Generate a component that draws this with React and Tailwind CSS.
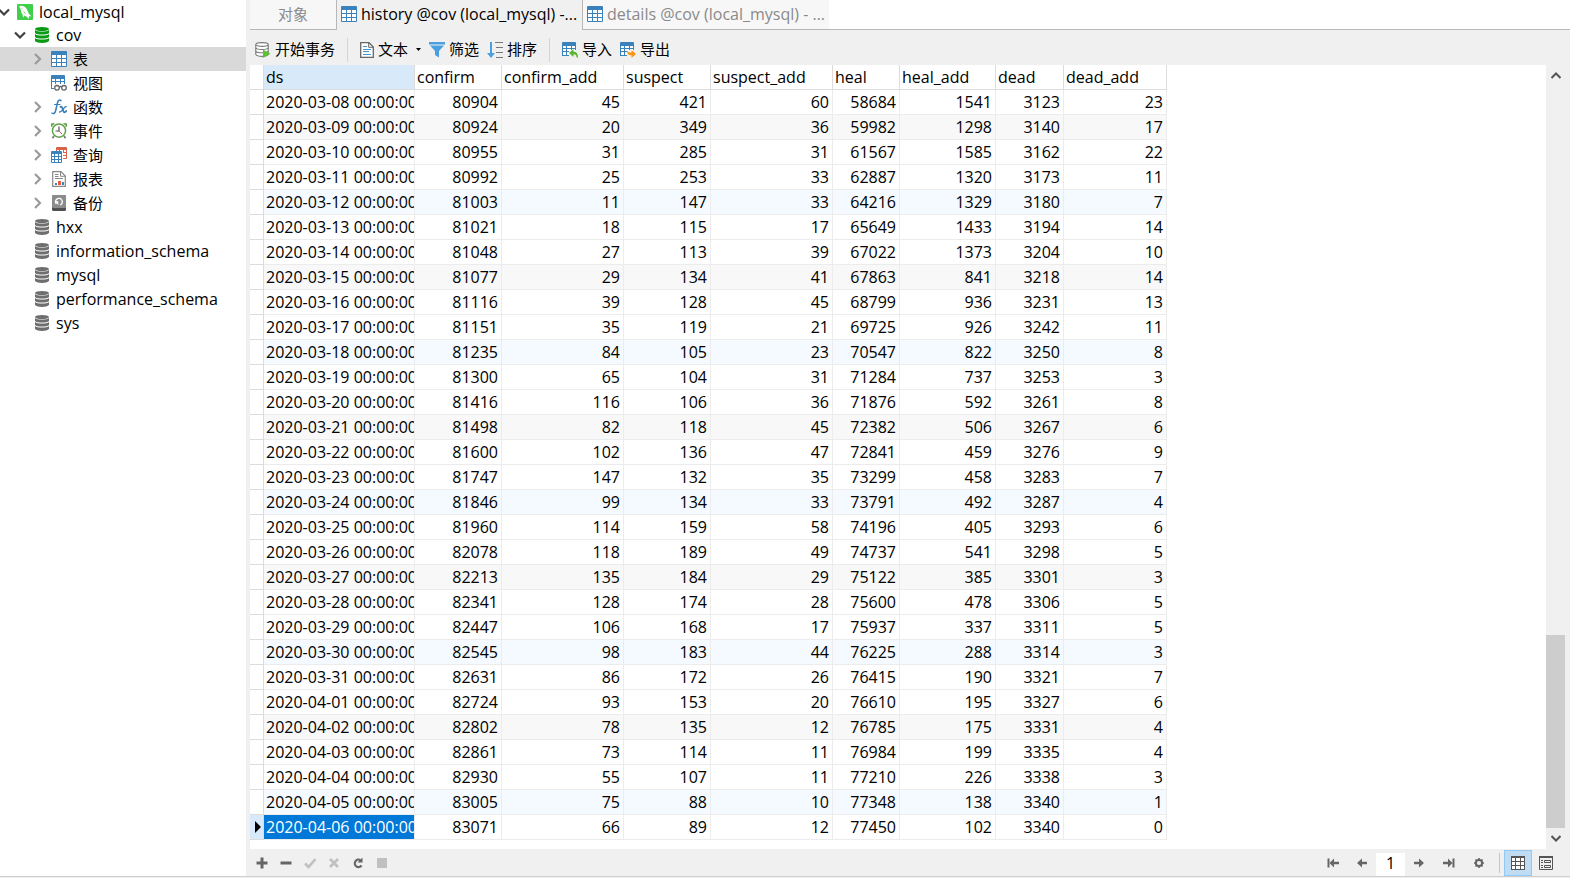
import React, { useState } from 'react';

const columns = [
  { name: 'ds', width: 'w-[151px]' },
  { name: 'confirm', width: 'w-[87px]' },
  { name: 'confirm_add', width: 'w-[122px]' },
  { name: 'suspect', width: 'w-[87px]' },
  { name: 'suspect_add', width: 'w-[122px]' },
  { name: 'heal', width: 'w-[67px]' },
  { name: 'heal_add', width: 'w-[96px]' },
  { name: 'dead', width: 'w-[68px]' },
  { name: 'dead_add', width: 'w-[103px]' },
];

const rows = [
  ['2020-03-08 00:00:00', 80904, 45, 421, 60, 58684, 1541, 3123, 23],
  ['2020-03-09 00:00:00', 80924, 20, 349, 36, 59982, 1298, 3140, 17],
  ['2020-03-10 00:00:00', 80955, 31, 285, 31, 61567, 1585, 3162, 22],
  ['2020-03-11 00:00:00', 80992, 25, 253, 33, 62887, 1320, 3173, 11],
  ['2020-03-12 00:00:00', 81003, 11, 147, 33, 64216, 1329, 3180, 7],
  ['2020-03-13 00:00:00', 81021, 18, 115, 17, 65649, 1433, 3194, 14],
  ['2020-03-14 00:00:00', 81048, 27, 113, 39, 67022, 1373, 3204, 10],
  ['2020-03-15 00:00:00', 81077, 29, 134, 41, 67863, 841, 3218, 14],
  ['2020-03-16 00:00:00', 81116, 39, 128, 45, 68799, 936, 3231, 13],
  ['2020-03-17 00:00:00', 81151, 35, 119, 21, 69725, 926, 3242, 11],
  ['2020-03-18 00:00:00', 81235, 84, 105, 23, 70547, 822, 3250, 8],
  ['2020-03-19 00:00:00', 81300, 65, 104, 31, 71284, 737, 3253, 3],
  ['2020-03-20 00:00:00', 81416, 116, 106, 36, 71876, 592, 3261, 8],
  ['2020-03-21 00:00:00', 81498, 82, 118, 45, 72382, 506, 3267, 6],
  ['2020-03-22 00:00:00', 81600, 102, 136, 47, 72841, 459, 3276, 9],
  ['2020-03-23 00:00:00', 81747, 147, 132, 35, 73299, 458, 3283, 7],
  ['2020-03-24 00:00:00', 81846, 99, 134, 33, 73791, 492, 3287, 4],
  ['2020-03-25 00:00:00', 81960, 114, 159, 58, 74196, 405, 3293, 6],
  ['2020-03-26 00:00:00', 82078, 118, 189, 49, 74737, 541, 3298, 5],
  ['2020-03-27 00:00:00', 82213, 135, 184, 29, 75122, 385, 3301, 3],
  ['2020-03-28 00:00:00', 82341, 128, 174, 28, 75600, 478, 3306, 5],
  ['2020-03-29 00:00:00', 82447, 106, 168, 17, 75937, 337, 3311, 5],
  ['2020-03-30 00:00:00', 82545, 98, 183, 44, 76225, 288, 3314, 3],
  ['2020-03-31 00:00:00', 82631, 86, 172, 26, 76415, 190, 3321, 7],
  ['2020-04-01 00:00:00', 82724, 93, 153, 20, 76610, 195, 3327, 6],
  ['2020-04-02 00:00:00', 82802, 78, 135, 12, 76785, 175, 3331, 4],
  ['2020-04-03 00:00:00', 82861, 73, 114, 11, 76984, 199, 3335, 4],
  ['2020-04-04 00:00:00', 82930, 55, 107, 11, 77210, 226, 3338, 3],
  ['2020-04-05 00:00:00', 83005, 75, 88, 10, 77348, 138, 3340, 1],
  ['2020-04-06 00:00:00', 83071, 66, 89, 12, 77450, 102, 3340, 0],
];

const rowColor = (i) => {
  if (i % 6 === 1) return 'bg-[#f8f8f8]';
  if (i % 6 === 4) return 'bg-[#f4faff]';
  return 'bg-white';
};

const Chevron = ({ open }) => (
  <svg width="12" height="12" viewBox="0 0 12 12" fill="none" strokeWidth="2.2" stroke={open ? '#404040' : '#9a9a9a'}>
    <path d={open ? 'M1 3.5L6 8.5L11 3.5' : 'M3 1L8 6L3 11'} />
  </svg>
);

const ServerIcon = () => (
  <svg width="16" height="16" viewBox="0 0 16 16">
    <rect width="16" height="16" rx="1" fill="#3fcf4b" />
    <path d="M2 2.2C4.5 0.8 8 2.2 9.6 4.8C10.8 7 11 9.5 14.5 12.3L12 12.2L11.8 15C10.5 13 9 12.6 7.6 11.6L6 13.8L5.6 10.6C3.8 8.6 4.6 5.4 2 2.2Z" fill="#fff" />
    <path d="M4.6 4.4L5.4 5M6.5 7.5L8.5 9.5" stroke="#3fcf4b" strokeWidth="0.9" />
  </svg>
);

const DatabaseIcon = ({ color }) => (
  <svg width="14" height="16" viewBox="0 0 14 16" fill={color}>
    <ellipse cx="7" cy="2" rx="7" ry="2" />
    <path d="M0 3C2 5 12 5 14 3V6C12 8 2 8 0 6Z" />
    <path d="M0 7C2 9 12 9 14 7V10C12 12 2 12 0 10Z" />
    <path d="M0 11C2 13 12 13 14 11V14C12 16.5 2 16.5 0 14Z" />
  </svg>
);

const TableIcon = () => (
  <svg width="16" height="16" viewBox="0 0 16 16">
    <rect width="16" height="16" rx="1" fill="#3b82bd" />
    <path d="M1 4H5V7H1ZM6 4H10V7H6ZM11 4H15V7H11ZM1 8H5V11H1ZM6 8H10V11H6ZM11 8H15V11H11ZM1 12H5V15H1ZM6 12H10V15H6ZM11 12H15V15H11Z" fill="#fff" />
  </svg>
);

const ViewIcon = () => (
  <svg width="16" height="16" viewBox="0 0 16 16">
    <path d="M0 1Q0 0 1 0H13Q14 0 14 1V9H0Z" fill="#3b82bd" />
    <path d="M0 8H1V13H3V14H0Z" fill="#3b82bd" />
    <path d="M1 4H4V6H1ZM5 4H9V6H5ZM10 4H13V6H10ZM1 7H4V9H1ZM5 7H9V9H5ZM10 7H13V9H10Z" fill="#fff" />
    <g fill="#fff" stroke="#666" strokeWidth="1.3">
      <circle cx="6" cy="12.8" r="2.3" />
      <circle cx="13" cy="12.8" r="2.3" />
      <path d="M8.3 12Q9.5 11 10.7 12" fill="none" />
    </g>
  </svg>
);

const FunctionIcon = () => (
  <svg width="16" height="16" viewBox="0 0 16 16" fill="none" stroke="#3b7fb5" strokeLinecap="round">
    <path d="M10 1.6C8.2 0.2 7 1.5 6.3 4.5L4.7 11.5C4 14.3 2.8 15.2 1 14.2" strokeWidth="1.5" />
    <path d="M3.5 5.5H9" strokeWidth="1.2" />
    <path d="M9.5 7.8C11.8 6.5 11.8 13 13 13.2C13.8 13.4 14.5 13 15.2 12" strokeWidth="1.9" />
    <path d="M15.2 7.5C13 7.5 11 13.5 8.5 13" strokeWidth="1.3" />
  </svg>
);

const EventIcon = () => (
  <svg width="16" height="16" viewBox="0 0 16 16" fill="none">
    <path d="M0.8 3.8V1.2L3.5 0.8M15.2 3.8V1.2L12.5 0.8" stroke="#5fa046" strokeWidth="1.6" />
    <path d="M3 13L1.5 15.3M13 13L14.5 15.3" stroke="#777" strokeWidth="1.6" />
    <circle cx="8" cy="7.6" r="6.6" fill="#fff" stroke="#5fa046" strokeWidth="1.5" />
    <path d="M8 3.5V8H4.5" stroke="#555" strokeWidth="1.2" />
    <path d="M8 8L11 11" stroke="#e05a4a" />
  </svg>
);

const QueryIcon = () => (
  <svg width="16" height="16" viewBox="0 0 16 16">
    <rect x="5" width="11" height="12" rx="1" fill="#d9634a" />
    <path d="M6 3H8V5H6ZM9 3H12V5H9ZM13 3H15V5H13ZM12 6H15V8H12ZM12 9H15V11H12Z" fill="#fff" />
    <path d="M0 4H12V16H0Z" fill="#fff" />
    <rect y="4" width="11" height="12" rx="1" fill="#3b82bd" />
    <path d="M1 7H3V9H1ZM4 7H7V9H4ZM8 7H10V9H8ZM1 10H3V12H1ZM4 10H7V12H4ZM8 10H10V12H8ZM1 13H3V15H1ZM4 13H7V15H4ZM8 13H10V15H8Z" fill="#fff" />
  </svg>
);

const ReportIcon = () => (
  <svg width="14" height="16" viewBox="0 0 14 16">
    <path d="M0.7 0.7H9L13.3 5V15.3H0.7Z" fill="#fff" stroke="#888" strokeWidth="1.2" />
    <path d="M8.5 0.7V5.3H13.3M3 3.5H6.5M3 5.5H6.5M3 7.5H11" fill="none" stroke="#888" />
    <path d="M3 12H5V14H3Z" fill="#3b82bd" />
    <path d="M6 10H9V14H6Z" fill="#ee5b3a" />
    <path d="M10 11H12V14H10Z" fill="#3b82bd" />
  </svg>
);

const BackupIcon = () => (
  <svg width="14" height="16" viewBox="0 0 14 16">
    <rect width="14" height="16" rx="1.5" fill="#505050" />
    <rect width="14" height="13" rx="1.5" fill="#8c8c8c" />
    <path d="M4.2 8.8A3.4 3.4 0 1 1 8.2 9.9" fill="none" stroke="#fff" strokeWidth="1.3" />
    <path d="M2.5 6.3H6.3V10Z" fill="#fff" />
  </svg>
);

const TransactionIcon = () => (
  <svg width="16" height="16" viewBox="0 0 16 16">
    <g fill="#fff" stroke="#777" strokeWidth="1.1">
      <path d="M0.8 2.5V12.5C2.5 15 11.5 15 13.2 12.5V2.5" />
      <ellipse cx="7" cy="2.5" rx="6.2" ry="1.9" />
      <path d="M0.8 6C2.5 8 11.5 8 13.2 6M0.8 9.3C2.5 11.3 11.5 11.3 13.2 9.3" fill="none" />
    </g>
    <path d="M8 7.5L15.5 11.8L8 16Z" fill="#5cc22e" />
  </svg>
);

const TextIcon = () => (
  <svg width="14" height="16" viewBox="0 0 14 16">
    <path d="M0.7 0.7H9L13.3 5V15.3H0.7Z" fill="#fff" stroke="#666" strokeWidth="1.3" />
    <path d="M8.7 0.7V5.3H13.3" fill="none" stroke="#666" />
    <path d="M3 4.5H7M3 7.5H11M3 9.5H9M3 12.5H11" stroke="#3f96d6" />
  </svg>
);

const FilterIcon = () => (
  <svg width="16" height="16" viewBox="0 0 16 16" fill="#4a9fe0">
    <path d="M0 0H16V2.5H0ZM1 3.5H15L10 9V15.5L6 13V9Z" />
  </svg>
);

const SortIcon = () => (
  <svg width="16" height="16" viewBox="0 0 16 16">
    <path d="M3 0H5V11H8L4 16L0 11H3Z" fill="#4a9fe0" />
    <path d="M8 0.5H16M9 5.5H16M9 10.5H16M9 15.5H16" stroke="#777" />
  </svg>
);

const TransferIcon = ({ out }) => (
  <svg width="16" height="16" viewBox="0 0 16 16">
    <path d="M0 1Q0 0 1 0H13Q14 0 14 1V8H7V14H0Z" fill="#3b82bd" />
    <path d="M1 4H4V6H1ZM5 4H9V6H5ZM10 4H13V6H10ZM1 7H4V9H1ZM5 7H9V9H5ZM10 7H13V9H10ZM1 10H4V13H1ZM5 10H7V13H5Z" fill="#fff" />
    {out ? (
      <path d="M7 7.5C7 10 8.5 10.5 11.5 10.5V8L16 12L11.5 16V13.3C8 13.3 6.5 11 7 7.5Z" fill="#fb9414" />
    ) : (
      <path d="M7 11L11.5 7V9.5C14.5 9.5 16 11.5 16 15.5H14.5C14.5 13 13.5 12.3 11.5 12.3V15Z" fill="#5cb531" />
    )}
  </svg>
);

const folders = [
  { label: '表', icon: <TableIcon />, arrow: true, selected: true },
  { label: '视图', icon: <ViewIcon />, arrow: false },
  { label: '函数', icon: <FunctionIcon />, arrow: true },
  { label: '事件', icon: <EventIcon />, arrow: true },
  { label: '查询', icon: <QueryIcon />, arrow: true },
  { label: '报表', icon: <ReportIcon />, arrow: true },
  { label: '备份', icon: <BackupIcon />, arrow: true },
];

const databases = ['hxx', 'information_schema', 'mysql', 'performance_schema', 'sys'];

const Sidebar = () => (
  <nav className="w-[246px] shrink-0 bg-white">
    <ul>
      <li className="flex h-[23px] items-center">
        <span className="mr-1 -ml-1 flex w-4 shrink-0 justify-center"><Chevron open /></span>
        <span className="mr-0.5 ml-px w-5"><ServerIcon /></span>
        <span>local_mysql</span>
      </li>
      <li className="flex h-6 items-center pl-3">
        <span className="flex w-4 justify-center"><Chevron open /></span>
        <span className="flex w-7 justify-center"><DatabaseIcon color="#0a9a14" /></span>
        <span>cov</span>
      </li>
      {folders.map((f) => (
        <li key={f.label} className={`flex h-6 items-center pl-8 text-[15px] ${f.selected ? 'bg-[#d9d9d9]' : ''}`}>
          <span className="flex w-3 justify-center">{f.arrow && <Chevron />}</span>
          <span className="flex w-[29px] justify-center">{f.icon}</span>
          <span>{f.label}</span>
        </li>
      ))}
      {databases.map((name) => (
        <li key={name} className="flex h-6 items-center pl-7">
          <span className="flex w-7 justify-center"><DatabaseIcon color="#6e6e6e" /></span>
          <span>{name}</span>
        </li>
      ))}
    </ul>
  </nav>
);

const Tabs = () => (
  <div className="flex h-[30px] bg-white" role="tablist">
    <button role="tab" className="w-[87px] border-r border-b border-[#b8b8b8] bg-[#f7f7f7] text-[15px] text-[#8a8a8a]">对象</button>
    <button role="tab" aria-selected="true" className="flex w-[245px] items-center gap-1 bg-[#f0f0f0] pb-0.5 pl-1 whitespace-nowrap">
      <TableIcon />
      history @cov (local_mysql) -...
    </button>
    <div className="flex flex-1 border-b border-l border-[#b8b8b8]">
      <button role="tab" className="flex w-[246px] items-center gap-1 bg-[#f7f7f7] pb-px pl-1 whitespace-nowrap text-[#8a8a8a]">
        <TableIcon />
        details @cov (local_mysql) - ...
      </button>
    </div>
  </div>
);

const ToolButton = ({ icon, children }) => (
  <button className="flex items-center gap-1 whitespace-nowrap text-[15px]">
    {icon}
    {children}
  </button>
);

const Toolbar = () => (
  <div className="flex h-[35px] items-center pt-1 pl-[5px]">
    <ToolButton icon={<TransactionIcon />}>开始事务</ToolButton>
    <span className="mx-3 h-6 w-px bg-[#d4d4d4]" />
    <ToolButton icon={<TextIcon />}>
      文本
      <svg className="ml-1" width="5" height="3" viewBox="0 0 5 3"><path d="M0 0H5L2.5 3Z" /></svg>
    </ToolButton>
    <span className="w-2" />
    <ToolButton icon={<FilterIcon />}>筛选</ToolButton>
    <span className="w-2" />
    <ToolButton icon={<SortIcon />}>排序</ToolButton>
    <span className="mx-3 h-6 w-px bg-[#d4d4d4]" />
    <ToolButton icon={<TransferIcon />}>导入</ToolButton>
    <span className="w-2" />
    <ToolButton icon={<TransferIcon out />}>导出</ToolButton>
  </div>
);

const Grid = ({ current, onSelect }) => (
  <div className="min-w-0 flex-1 overflow-hidden bg-white pb-[9px]">
    <table className="w-[917px] table-fixed border-separate border-spacing-0">
      <thead>
        <tr className="h-[25px]">
          <th className="w-[14px] border-r border-b border-[#dcdcdc] p-0" aria-label="row" />
          {columns.map((c) => (
            <th
              key={c.name}
              className={`${c.width} border-r border-b border-[#dcdcdc] p-0 pl-0.5 text-left leading-6 font-normal ${c.name === 'ds' ? 'bg-[#d8eaf9]' : ''}`}
            >
              {c.name}
            </th>
          ))}
        </tr>
      </thead>
      <tbody>
        {rows.map((row, i) => (
          <tr key={row[0]} className={`h-[25px] ${rowColor(i)}`} onClick={() => onSelect(i)}>
            <td className={`border-r border-b border-[#dcdcdc] p-0 ${i === current ? 'bg-[#d8eaf9]' : 'bg-white'}`}>
              {i === current && (
                <svg className="ml-1" width="7" height="12" viewBox="0 0 7 12"><path d="M1 0L7 6L1 12Z" /></svg>
              )}
            </td>
            {row.map((value, j) => (
              <td
                key={columns[j].name}
                className={`overflow-hidden border-r border-b border-[#ececec] p-0 leading-6 whitespace-nowrap ${j === 0 ? 'pl-0.5' : 'pr-[3px] text-right'} ${j === 0 && i === current ? 'bg-[#0078d7] text-white' : ''}`}
              >
                {value}
              </td>
            ))}
          </tr>
        ))}
      </tbody>
    </table>
  </div>
);

const ScrollBar = () => (
  <div className="flex w-6 shrink-0 flex-col pr-[5px]">
    <button aria-label="scroll up" className="flex h-5 items-center justify-center">
      <svg width="10" height="7" viewBox="0 0 10 7" fill="none" stroke="#555" strokeWidth="2"><path d="M0.5 6L5 1.5L9.5 6" /></svg>
    </button>
    <div className="flex flex-1 flex-col justify-end">
      <div className="h-[26%] bg-[#cdcdcd]" />
    </div>
    <button aria-label="scroll down" className="flex h-[21px] items-center justify-center">
      <svg width="10" height="7" viewBox="0 0 10 7" fill="none" stroke="#555" strokeWidth="2"><path d="M0.5 1L5 5.5L9.5 1" /></svg>
    </button>
  </div>
);

const IconButton = ({ label, children }) => (
  <button aria-label={label} className="flex size-6 items-center justify-center">
    <svg width="12" height="12" viewBox="0 0 12 12" fill="#666">{children}</svg>
  </button>
);

const StatusBar = ({ page, onPage }) => (
  <div className="flex h-[27px] items-center">
    <div className="flex">
      <IconButton label="add"><path d="M4.5 0.5H7.5V4.5H11.5V7.5H7.5V11.5H4.5V7.5H0.5V4.5H4.5Z" /></IconButton>
      <IconButton label="delete"><path d="M0.5 4.5H11.5V7.5H0.5Z" /></IconButton>
      <IconButton label="apply"><path d="M1 6.5L4.5 10L11.5 2" fill="none" stroke="#c0c0c0" strokeWidth="2.6" /></IconButton>
      <IconButton label="discard"><path d="M2 2L10 10M10 2L2 10" stroke="#c0c0c0" strokeWidth="2.6" /></IconButton>
      <IconButton label="refresh">
        <path d="M8.5 3.2A3.7 3.7 0 1 0 9.5 8.5" fill="none" stroke="#666" strokeWidth="2.2" />
        <path d="M10.5 0.5V5.5H5.5Z" />
      </IconButton>
      <IconButton label="stop"><path d="M1 1H11V11H1Z" fill="#c0c0c0" /></IconButton>
    </div>
    <div className="ml-auto flex items-center pr-2.5">
      <div className="flex items-center gap-[5px]">
        <IconButton label="first page"><path d="M0.5 1.5H2.5V10.5H0.5ZM2.5 6L7 1.5V4.8H12V7.2H7V10.5Z" /></IconButton>
        <IconButton label="previous page"><path d="M1 6L6 1.5V4.8H11V7.2H6V10.5Z" /></IconButton>
      </div>
      <input
        aria-label="page"
        value={page}
        onChange={(e) => onPage(e.target.value)}
        className="mx-0.5 mt-1 h-[23px] w-[29px] bg-white pb-[3px] text-center"
      />
      <div className="flex items-center gap-1.5">
        <IconButton label="next page"><path d="M11 6L6 1.5V4.8H1V7.2H6V10.5Z" /></IconButton>
        <IconButton label="last page"><path d="M11.5 1.5H9.5V10.5H11.5ZM9.5 6L5 1.5V4.8H0V7.2H5V10.5Z" /></IconButton>
        <IconButton label="settings">
          <circle cx="6" cy="6" r="3.1" fill="none" stroke="#666" strokeWidth="2" />
          <path d="M6 1V11M1 6H11M2.5 2.5L9.5 9.5M9.5 2.5L2.5 9.5" stroke="#666" strokeWidth="1.6" strokeDasharray="2 6" />
        </IconButton>
      </div>
      <span className="mr-1 ml-2 h-5 w-px bg-[#c8c8c8]" />
      <button aria-label="grid view" className="flex h-[26px] w-7 items-center justify-center border border-[#90c8f6] bg-[#c0dcf3]">
        <svg width="14" height="14" viewBox="0 0 14 14">
          <path d="M0 0H14V14H0Z" fill="#555" />
          <path d="M1 2H4V5H1ZM5 2H9V5H5ZM10 2H13V5H10ZM1 6H4V9H1ZM5 6H9V9H5ZM10 6H13V9H10ZM1 10H4V13H1ZM5 10H9V13H5ZM10 10H13V13H10Z" fill="#fff" />
        </svg>
      </button>
      <button aria-label="form view" className="flex h-[26px] w-7 items-center justify-center">
        <svg width="14" height="14" viewBox="0 0 14 14" fill="none" stroke="#555">
          <path d="M0.5 1H13.5V13.5H0.5Z" />
          <path d="M0 1H14" strokeWidth="2" />
          <path d="M2 4.5H4M2 6.5H4M5.5 4.5H11.5V6.5H5.5ZM2 9.5H4M2 11.5H4M5.5 9.5H11.5V11.5H5.5Z" />
        </svg>
      </button>
    </div>
  </div>
);

const App = () => {
  const [current, setCurrent] = useState(29);
  const [page, setPage] = useState('1');

  return (
    <div className="min-h-screen bg-[#f0f0f0] font-['Open_Sans','Noto_Sans_CJK_SC',sans-serif] text-base text-black">
      <div className="flex border-b border-[#cfcfcf]">
        <Sidebar />
        <main className="flex min-w-0 flex-1 flex-col pl-1">
          <Tabs />
          <Toolbar />
          <div className="flex">
            <Grid current={current} onSelect={setCurrent} />
            <ScrollBar />
          </div>
          <StatusBar page={page} onPage={setPage} />
        </main>
      </div>
    </div>
  );
};

export default App;
